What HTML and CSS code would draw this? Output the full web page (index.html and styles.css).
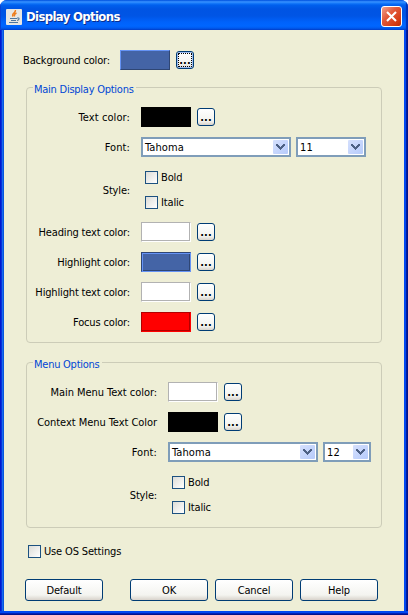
FILE: index.html
```html
<!DOCTYPE html>
<html lang="en">
<head>
<meta charset="utf-8">
<title>Display Options</title>
<link rel="stylesheet" href="styles.css">
</head>
<body>
<svg width="0" height="0" class="defs" aria-hidden="true">
  <symbol id="chev" viewBox="0 0 9 6"><path d="M0 0h2v1h1v1h1v1h1v-1h1v-1h1v-1h2v2h-1v1h-1v1h-1v1h-1v1h-1v-1h-1v-1h-1v-1h-1v-1h-1z" fill="#4d6185"/></symbol>
</svg>
<div class="window">
  <header class="titlebar">
    <svg class="java" width="16" height="16" viewBox="0 0 16 16">
      <rect width="16" height="16" rx="1" fill="#e9e7e2"/>
      <path d="M9.500 1C10 4 5 4.500 7 7.500M10.500 4C8 5 8 6 8.500 7.500" fill="none" stroke="#ee7d1c" stroke-width="1.400"/>
      <path d="M4 9.500h7M5 11.500h5M3 13.500h9M11 9c3-.5 2.500 2 0 2.500" fill="none" stroke="#4f779f" stroke-width="1.100"/>
    </svg>
    <h1 class="title">Display Options</h1>
    <button class="close" aria-label="Close"><svg width="11" height="11" viewBox="0 0 11 11"><path d="M1 1l9 9M10 1l-9 9" stroke="#fff" stroke-width="2.100"/></svg></button>
  </header>
  <main class="client">
    <div class="row top"><span class="label">Background color:</span><i class="swatch blue raised"></i><button class="more focus">...</button></div>

    <section class="group main">
      <h2 class="legend">Main Display Options</h2>
      <div class="row"><span class="label loose">Text color:</span><i class="swatch black"></i><button class="more">...</button></div>
      <div class="row"><span class="label loose">Font:</span><div class="combo wide"><span>Tahoma</span><b class="drop"><svg width="9" height="6"><use href="#chev"/></svg></b></div><div class="combo size"><span>11</span><b class="drop"><svg width="9" height="6"><use href="#chev"/></svg></b></div></div>
      <div class="row style"><span class="label">Style:</span><div class="checks"><label class="check"><i class="box"></i><span>Bold</span></label><label class="check"><i class="box"></i><span>Italic</span></label></div></div>
      <div class="row"><span class="label">Heading text color:</span><i class="swatch white"></i><button class="more">...</button></div>
      <div class="row"><span class="label">Highlight color:</span><i class="swatch blue"></i><button class="more">...</button></div>
      <div class="row"><span class="label">Highlight text color:</span><i class="swatch white"></i><button class="more">...</button></div>
      <div class="row"><span class="label">Focus color:</span><i class="swatch red"></i><button class="more">...</button></div>
    </section>

    <section class="group menu">
      <h2 class="legend">Menu Options</h2>
      <div class="row"><span class="label mid">Main Menu Text color:</span><i class="swatch white"></i><button class="more">...</button></div>
      <div class="row"><span class="label mid">Context Menu Text Color</span><i class="swatch black"></i><button class="more">...</button></div>
      <div class="row"><span class="label loose">Font:</span><div class="combo wide"><span>Tahoma</span><b class="drop"><svg width="9" height="6"><use href="#chev"/></svg></b></div><div class="combo size"><span>12</span><b class="drop"><svg width="9" height="6"><use href="#chev"/></svg></b></div></div>
      <div class="row style"><span class="label">Style:</span><div class="checks"><label class="check"><i class="box"></i><span>Bold</span></label><label class="check"><i class="box"></i><span>Italic</span></label></div></div>
    </section>

    <label class="check os"><i class="box"></i><span>Use OS Settings</span></label>
    <footer class="actions"><button class="btn default">Default</button><button class="btn">OK</button><button class="btn">Cancel</button><button class="btn">Help</button></footer>
  </main>
</div>
</body>
</html>
```
FILE: styles.css
```css
* { box-sizing: border-box; }
html, body { margin: 0; width: 408px; height: 615px; overflow: hidden; background: #fff; }
body, button { font-family: "DejaVu Sans Condensed", "DejaVu Sans", sans-serif; font-stretch: condensed; font-size: 11px; line-height: 14px; letter-spacing: -0.3px; color: #000; }
.defs { position: absolute; }
.window { width: 408px; height: 615px; border-radius: 7px 7px 0 0; overflow: hidden; display: flex; flex-direction: column;
  background:
    linear-gradient(#0048f1 0 2px, #0020b8 2px 3px, #00138c 3px) bottom / 100% 4px no-repeat,
    linear-gradient(90deg, #0019cf 0 1px, #0831d9 1px 2px, #166aee 2px 3px, #0855dd 3px 4px, #0048f1 4px calc(100% - 2px), #001ea0 calc(100% - 2px) calc(100% - 1px), #00138c calc(100% - 1px)); }
.titlebar { height: 30px; flex: none; display: flex; align-items: center; padding: 3px 6px 0 6px; background: linear-gradient(#0058e6 0, #3a93ff 2px, #1a7dfb 3px, #0060ee 5px, #0054e3 9px, #0055e5 16px, #0062fb 22px, #0066ff 26px, #005bf0 28px, #0341cb 30px); box-shadow: inset 1px 0 #0842d4, inset -2px 0 1px #0030b8; }
.java { flex: none; }
.title { margin: 1px 0 0 4px; font-size: 13px; line-height: 16px; font-weight: bold; letter-spacing: -0.65px; color: #fff; text-shadow: 1px 1px 0 #0b2e8c; flex: 1; }
.close { width: 21px; height: 21px; padding: 0; border: 1px solid #fff; border-radius: 3px; background: linear-gradient(135deg, #f0a08c, #e2593a 40%, #d63a12 80%, #b82c08); display: flex; align-items: center; justify-content: center; }
.client { flex: 1; margin: 0 4px 4px; background: #eeeed6; padding-top: 15px; }
.row { height: 30px; display: flex; align-items: center; }
.label { text-align: right; white-space: nowrap; flex: none; padding-top: 2px; letter-spacing: -0.16px; }
.mid { letter-spacing: -0.05px; }
.loose { letter-spacing: 0.1px; }
.top { padding-left: 19px; }
.top .label { width: 86px; margin-right: 11px; }
.swatch { width: 50px; height: 20px; flex: none; border: 1px solid; }
.blue { background: #4464a6; border-color: #2f4674 #6593f5 #6593f5 #2f4674; box-shadow: inset 1px 1px #6593f5, inset -1px -1px #2f4674; }
.blue.raised { border-color: #6593f5 #2f4674 #2f4674 #6593f5; box-shadow: none; }
.black { background: #000; border-color: #000; }
.white { background: #fff; border-color: #b2b2b2 #fff #fff #b2b2b2; box-shadow: inset -1px -1px #b2b2b2; }
.red { background: #f00; border-color: #b20000 #f00 #f00 #b20000; box-shadow: inset -1px -1px #b20000; }
.more { width: 18px; height: 18px; margin-left: 6px; padding: 1px 0 0; border: 1px solid #003c74; border-radius: 3px; background: linear-gradient(#fff, #f3f3ef 75%, #d8d3cb); font-weight: bold; line-height: 14px; letter-spacing: 0; text-align: center; }
.focus { box-shadow: inset 0 0 0 1px #9ebcf0; outline: 1px dotted #000; outline-offset: -3px; }
.group { position: relative; width: 356px; margin-left: 22px; border: 1px solid #ccccb8; border-radius: 4px; padding-top: 14px; }
.main { height: 256px; margin-top: 12px; }
.menu { height: 166px; margin-top: 19px; }
.legend { position: absolute; left: 6px; top: -5px; margin: 0; padding: 0 2px 0 1px; background: #eeeed6; color: #0046d5; font: inherit; line-height: 14px; letter-spacing: -0.25px; white-space: nowrap; }
.main .label { width: 103px; margin-right: 11px; }
.menu .label { width: 130px; margin-right: 11px; }
.style { height: 55px; }
.checks { height: 38px; margin-left: 4px; display: flex; flex-direction: column; justify-content: space-between; }
.check { display: flex; align-items: center; height: 13px; letter-spacing: -0.15px; }
.check span { padding-top: 1px; }
.box { width: 13px; height: 13px; margin-right: 3px; flex: none; border: 1px solid #1c5180; background: linear-gradient(135deg, #dcdcd7, #fff); }
.combo { height: 20px; border: 2px solid #7f9db9; background: #fff; display: flex; align-items: center; justify-content: space-between; padding: 0 1px 0 2px; letter-spacing: 0.1px; }
.combo span { padding-top: 1px; }
.wide { width: 150px; margin-right: 5px; }
.size { width: 70px; }
.menu .size { width: 48px; }
.drop { width: 15px; height: 14px; border-radius: 1px; background: linear-gradient(135deg, #d5e0fd, #b6cbfb); display: flex; align-items: center; justify-content: center; }
.os { margin: 17px 0 0 24px; }
.actions { display: flex; gap: 7px; margin: 21px 0 0 21px; }
.btn { width: 78px; height: 22px; padding: 1px 0 0; border: 1px solid #003c74; border-radius: 3px; background: linear-gradient(#fff, #f4f4f0 75%, #d8d3cb); text-align: center; letter-spacing: -0.15px; }
.default { margin-right: 20px; }
```
